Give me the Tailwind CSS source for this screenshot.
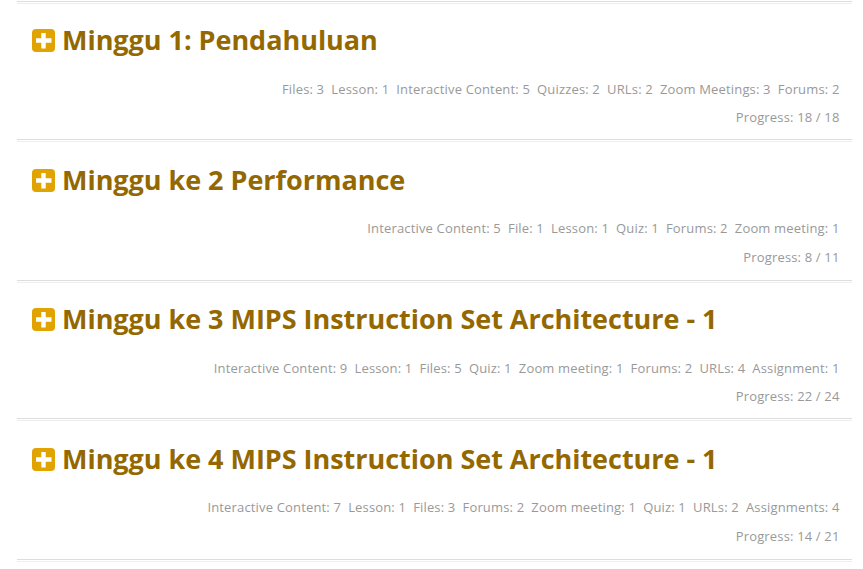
<!DOCTYPE html>
<html lang="id"><head><meta charset="utf-8"><title>Minggu</title>
<script src="https://cdn.jsdelivr.net/npm/@tailwindcss/browser@4"></script></head>
<body class="bg-white overflow-hidden">
<svg class="hidden"><symbol id="plus" viewBox="0 0 23 23"><rect width="23" height="23" rx="4" fill="#e1a300"/><path d="M11.5 4v15.5M4 11.5h15.5" stroke="#fff" stroke-width="4.4"/></symbol></svg>
<ul class="mt-px ml-[17px] w-[835px] font-['Open_Sans',sans-serif] text-[13px] tracking-[0.16px] text-[#999]">
<li class="h-[138px]"><div class="h-[3px] border-t border-b border-t-[#ddd] border-b-[#eee]"></div>
<div class="pt-[17px] pr-[12.5px] pl-[15px]">
<h3 class="flex h-[38px] items-center gap-[7px] text-[27px] font-bold tracking-[-0.03px] text-[#946800]"><svg class="mt-px size-[23px]"><use href="#plus"/></svg><span>Minggu 1: Pendahuluan</span></h3>
<p class="mt-[21px] flex h-5 items-center justify-end gap-[7.1px]"><span>Files: 3</span><span>Lesson: 1</span><span>Interactive Content: 5</span><span>Quizzes: 2</span><span>URLs: 2</span><span>Zoom Meetings: 3</span><span>Forums: 2</span></p>
<p class="mt-[7px] h-5 text-right leading-5">Progress: 18 / 18</p></div></li>
<li class="h-[141px]"><div class="h-[3px] border-t border-b border-t-[#ddd] border-b-[#eee]"></div>
<div class="pt-[19px] pr-[12.5px] pl-[15px]">
<h3 class="flex h-[38px] items-center gap-[7px] text-[27px] font-bold tracking-[-0.03px] text-[#946800]"><svg class="mt-px size-[23px]"><use href="#plus"/></svg><span>Minggu ke 2 Performance</span></h3>
<p class="mt-5 flex h-5 items-center justify-end gap-[7.1px]"><span>Interactive Content: 5</span><span>File: 1</span><span>Lesson: 1</span><span>Quiz: 1</span><span>Forums: 2</span><span>Zoom meeting: 1</span></p>
<p class="mt-2 h-5 text-right leading-5">Progress: 8 / 11</p></div></li>
<li class="h-[138px]"><div class="h-[3px] border-t border-b border-t-[#ddd] border-b-[#eee]"></div>
<div class="pt-[17px] pr-[12.5px] pl-[15px]">
<h3 class="flex h-[38px] items-center gap-[7px] text-[27px] font-bold tracking-[-0.03px] text-[#946800]"><svg class="mt-px size-[23px]"><use href="#plus"/></svg><span>Minggu ke 3 MIPS Instruction Set Architecture - 1</span></h3>
<p class="mt-[21px] flex h-5 items-center justify-end gap-[7.1px]"><span>Interactive Content: 9</span><span>Lesson: 1</span><span>Files: 5</span><span>Quiz: 1</span><span>Zoom meeting: 1</span><span>Forums: 2</span><span>URLs: 4</span><span>Assignment: 1</span></p>
<p class="mt-[7px] h-5 text-right leading-5">Progress: 22 / 24</p></div></li>
<li class="h-[141px]"><div class="h-[3px] border-t border-b border-t-[#ddd] border-b-[#eee]"></div>
<div class="pt-[19px] pr-[12.5px] pl-[15px]">
<h3 class="flex h-[38px] items-center gap-[7px] text-[27px] font-bold tracking-[-0.03px] text-[#946800]"><svg class="mt-px size-[23px]"><use href="#plus"/></svg><span>Minggu ke 4 MIPS Instruction Set Architecture - 1</span></h3>
<p class="mt-5 flex h-5 items-center justify-end gap-[7.1px]"><span>Interactive Content: 7</span><span>Lesson: 1</span><span>Files: 3</span><span>Forums: 2</span><span>Zoom meeting: 1</span><span>Quiz: 1</span><span>URLs: 2</span><span>Assignments: 4</span></p>
<p class="mt-2 h-5 text-right leading-5">Progress: 14 / 21</p></div></li>
<li class="h-[3px] border-t border-b border-t-[#ddd] border-b-[#eee]"></li>
</ul></body></html>
